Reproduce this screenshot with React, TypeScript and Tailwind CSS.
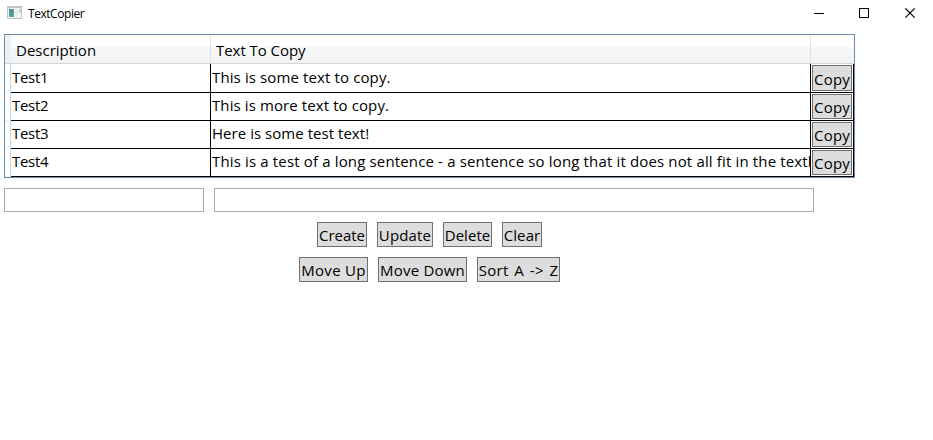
const rows = [
  { name: "Test1", text: "This is some text to copy.", track: "tracking-[0.12px]", offset: "pt-[3px]" },
  { name: "Test2", text: "This is more text to copy.", track: "tracking-[0.1px]", offset: "pt-[2px]" },
  { name: "Test3", text: "Here is some test text!", track: "tracking-[0.04px]", offset: "pt-[2px]" },
  { name: "Test4", text: "This is a test of a long sentence - a sentence so long that it does not all fit in the textb", track: "tracking-[0.15px]", offset: "pt-[2px]" },
];

const actions = [
  { label: "Create", size: "w-[50px]" },
  { label: "Update", size: "w-[56px] tracking-[0.15px]" },
  { label: "Delete", size: "w-[49px] tracking-[0.05px]" },
  { label: "Clear", size: "w-[40px] tracking-[0.1px]" },
];

const ordering = [
  { label: "Move Up", size: "w-[69px] tracking-[0.3px]" },
  { label: "Move Down", size: "w-[89px] tracking-[0.2px]" },
  { label: "Sort A -> Z", size: "w-[83px] tracking-[0.3px] [word-spacing:1.5px]" },
];

function Button({ label, size }: { label: string; size: string }) {
  return (
    <button className={`flex shrink-0 items-center justify-center whitespace-nowrap border border-[#707070] bg-[#dddddd] pt-px ${size}`}>
      {label}
    </button>
  );
}

function TitleBar() {
  return (
    <header className="flex h-[34px] items-start pl-[7px] text-[12px] leading-[16px]">
      <svg className="mt-[6px] h-[14px] w-[16px]" viewBox="0 0 16 14" shapeRendering="crispEdges">
        <defs>
          <linearGradient id="pane" x1="0" y1="0" x2="1" y2="1">
            <stop offset="0" stopColor="#4a82b8" />
            <stop offset="1" stopColor="#5fb07c" />
          </linearGradient>
        </defs>
        <path fill="#c4c4c4" d="M0 0h15v13H0z" />
        <path fill="#f6f6f6" d="M1 2h13v10H1z" />
        <path fill="url(#pane)" d="M2 3h5v8H2z" />
        <path fill="#e8ebee" d="M8 3h3v8H8z" />
        <path fill="#c3dac8" d="M12 3h2v4h-2z" />
      </svg>
      <span className="ml-[5px] mt-[6px] tracking-[-0.45px]">TextCopier</span>
      <svg className="ml-auto mr-[17px] mt-[8px] h-[10px] w-[102px]" viewBox="0 0 102 10" fill="none" stroke="#000">
        <path d="M0 5.5h10M45.5 .5h9v9h-9z" shapeRendering="crispEdges" />
        <path d="m91.3.3 9.4 9.4m0-9.4-9.4 9.4" strokeWidth="1.1" />
      </svg>
    </header>
  );
}

export default function App() {
  return (
    <main className="h-[440px] w-[933px] overflow-hidden bg-white font-['Open_Sans','Noto_Sans',sans-serif] text-[15px] leading-[20px] text-black">
      <TitleBar />
      <section className="ml-[4px] h-[144px] w-[851px] border border-[#688caf]">
        <div className="flex h-[29px] border-b border-[#d4d5d8] bg-[linear-gradient(#fff_0px,#fff_12px,#f7f8fa_12px,#f1f2f4_28px)]">
          <div className="w-[6px] bg-[#f0f0f0]" />
          <div className="w-[200px] border-r border-[#dfdfe1] pl-[5px] pt-[5px]">Description</div>
          <div className="w-[600px] border-r border-[#dfdfe1] pl-[5px] pt-[5px] tracking-[-0.05px]">Text To Copy</div>
        </div>
        {rows.map((row) => (
          <div key={row.name} className="flex h-[28px] [&:nth-child(2)]:h-[29px]">
            <div className="w-[6px] border-b border-r border-[#d5d5d5] border-b-[#f0f0f0] bg-white" />
            <div className={`w-[200px] border-b border-r border-black pl-px tracking-[-0.3px] ${row.offset}`}>{row.name}</div>
            <div className={`w-[600px] overflow-hidden whitespace-nowrap border-b border-r border-black pl-px ${row.offset} ${row.track}`}>{row.text}</div>
            <div className="flex w-[43px] border-b border-r border-black p-px">
              <Button label="Copy" size="w-[40px] tracking-[0.2px]" />
            </div>
          </div>
        ))}
      </section>
      <div className="ml-[4px] mt-[10px] flex h-[24px] gap-[10px]">
        <input className="w-[200px] border border-[#abadb3] bg-white px-1 outline-none" />
        <input className="w-[600px] border border-[#abadb3] bg-white px-1 outline-none" />
      </div>
      <div className="ml-[317px] mt-[10px] flex h-[25px] gap-[10px]">
        {actions.map((action) => <Button key={action.label} {...action} />)}
      </div>
      <div className="ml-[299px] mt-[10px] flex h-[25px] gap-[10px]">
        {ordering.map((action) => <Button key={action.label} {...action} />)}
      </div>
    </main>
  );
}
